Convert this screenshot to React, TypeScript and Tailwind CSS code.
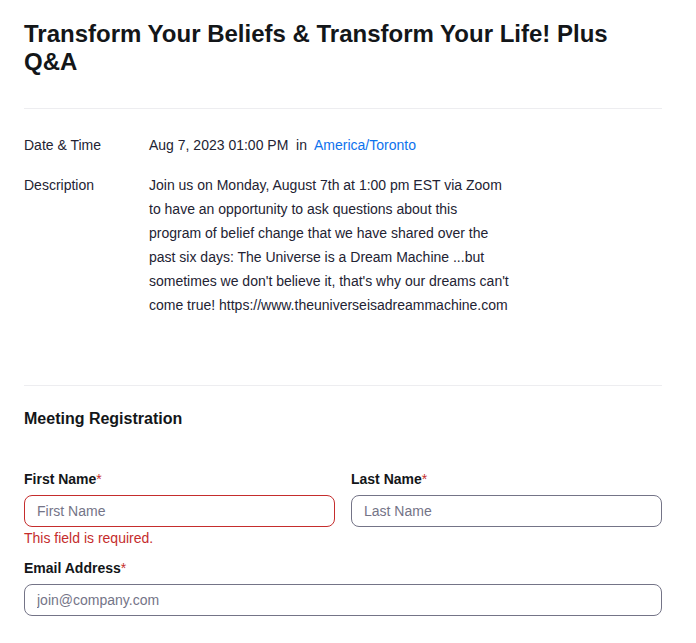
import React from "react";

export default function App() {
  return (
    <div className="min-h-screen bg-white text-[#232333] [font-family:'Liberation_Sans',Arial,sans-serif]">
      <div className="px-6 pt-[20px] w-[686px]">
        <h1 className="text-[24px] leading-[28px] font-bold text-[#131619] pr-6">
          Transform Your Beliefs &amp; Transform Your Life! Plus Q&amp;A
        </h1>
        <div className="mt-[32px] h-px bg-[#ededf0]" />
        <div className="pt-[24px] text-[14px] leading-[24px]">
          <div className="flex">
            <div className="w-[125px] shrink-0">Date &amp; Time</div>
            <div>
              Aug 7, 2023 01:00 PM&nbsp; in&nbsp;{" "}
              <span className="text-[#0e72ed]">America/Toronto</span>
            </div>
          </div>
          <div className="flex mt-[16px]">
            <div className="w-[125px] shrink-0">Description</div>
            <div className="w-[362px]">
              Join us on Monday, August 7th at 1:00 pm EST via Zoom to have an
              opportunity to ask questions about this program of belief change
              that we have shared over the past six days: The Universe is a
              Dream Machine ...but sometimes we don't believe it, that's why
              our dreams can't come true! https://www.theuniverseisadreammachine.com
            </div>
          </div>
        </div>
        <div className="mt-[68px] h-px bg-[#ededf0]" />
        <h2 className="mt-[23px] text-[16px] leading-[20px] font-bold text-[#131619]">
          Meeting Registration
        </h2>
        <div className="mt-[40px] flex gap-4">
          <div className="flex-1">
            <label className="block text-[14px] leading-[20px] font-bold text-[#131619]">
              First Name<span className="text-[#c52d2d] font-normal">*</span>
            </label>
            <input
              placeholder="First Name"
              className="mt-[6px] w-full h-[32px] rounded-[8px] border border-[#c52d2d] px-3 text-[14px] placeholder:text-[#747487] outline-none"
            />
            <div className="mt-[1px] text-[14px] leading-[20px] text-[#c52d2d]">
              This field is required.
            </div>
          </div>
          <div className="flex-1">
            <label className="block text-[14px] leading-[20px] font-bold text-[#131619]">
              Last Name<span className="text-[#c52d2d] font-normal">*</span>
            </label>
            <input
              placeholder="Last Name"
              className="mt-[6px] w-full h-[32px] rounded-[8px] border border-[#747487] px-3 text-[14px] placeholder:text-[#747487] outline-none"
            />
          </div>
        </div>
        <div className="mt-[10px]">
          <label className="block text-[14px] leading-[20px] font-bold text-[#131619]">
            Email Address<span className="text-[#c52d2d] font-normal">*</span>
          </label>
          <input
            placeholder="join@company.com"
            className="mt-[6px] w-full h-[32px] rounded-[8px] border border-[#747487] px-3 text-[14px] placeholder:text-[#747487] outline-none"
          />
        </div>
      </div>
    </div>
  );
}
